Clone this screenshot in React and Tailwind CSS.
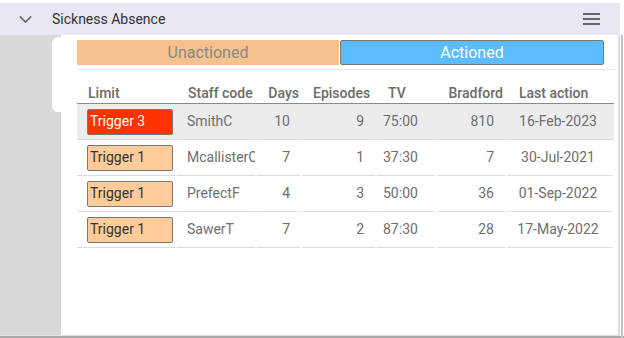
import React from 'react';
import { ChevronDown } from 'lucide-react';

const rows = [
  { limit: 'Trigger 3', level: 3, staff: 'SmithC', days: 10, episodes: 9, tv: '75:00', bradford: 810, last: '16-Feb-2023' },
  { limit: 'Trigger 1', level: 1, staff: 'McallisterC', days: 7, episodes: 1, tv: '37:30', bradford: 7, last: '30-Jul-2021' },
  { limit: 'Trigger 1', level: 1, staff: 'PrefectF', days: 4, episodes: 3, tv: '50:00', bradford: 36, last: '01-Sep-2022' },
  { limit: 'Trigger 1', level: 1, staff: 'SawerT', days: 7, episodes: 2, tv: '87:30', bradford: 28, last: '17-May-2022' },
];

// column widths taken from the cell separators
const cols = 'grid grid-cols-[98px_78px_43px_73px_58px_68px_106px] gap-x-[2px]';

export default function App() {
  return (
    <div className="w-[624px] h-[338px] bg-white overflow-hidden font-['Roboto',sans-serif] relative">
      <div className="pt-[3px] h-[336px] w-[620px] flex flex-col">
        {/* Widget header */}
        <div className="h-[32px] shrink-0 bg-[#e8e8f4] flex items-center">
          <ChevronDown size={21} strokeWidth={1.7} className="ml-[15px] text-[#666]" />
          <span className="ml-[16px] text-[14px] text-[#333]">Sickness Absence</span>
          <div className="ml-auto mr-[20px] flex flex-col gap-[3px]">
            <div className="w-[17px] h-[2px] bg-[#666]"></div>
            <div className="w-[17px] h-[2px] bg-[#666]"></div>
            <div className="w-[17px] h-[2px] bg-[#666]"></div>
          </div>
        </div>

        <div className="flex flex-1 min-h-0">
          <div className="w-[61px] shrink-0 bg-[#d8d8d8] border-b border-[#e6e6e6]"></div>
          <div className="flex-1 bg-white border-r-2 border-b border-[#e0e0e0] pl-[16px] pr-[4px] pt-[5px]">
            {/* Tabs */}
            <div className="flex h-[25px] mr-[10px]">
              <div className="w-[262px] bg-[#f5c28e] flex items-center justify-center text-[16px] text-[#888]">
                Unactioned
              </div>
              <div className="flex-1 ml-[1px] bg-[#5bbcff] border border-[#777] rounded-[2px] flex items-center justify-center text-[16px] text-white">
                Actioned
              </div>
            </div>
            <div className="mt-[4px] h-px bg-[#e2e2e2]"></div>

            {/* Table header */}
            <div className={`${cols} mt-[13px] h-[21px] border-b border-[#8a8a8a] text-[14px] font-medium text-[#6b6b6b] leading-[20px]`}>
              <div className="pl-[11px]">Limit</div>
              <div className="pl-[11px]">Staff code</div>
              <div className="text-right pr-[1px]">Days</div>
              <div className="pl-[11px]">Episodes</div>
              <div className="pl-[11px]">TV</div>
              <div className="text-right pr-[2px]">Bradford</div>
              <div className="pl-[12px]">Last action</div>
            </div>

            {/* Rows */}
            {rows.map((r, i) => (
              <div key={i} className={`${cols} h-[36px] text-[14px] text-[#6e6e6e] ${i === 0 ? 'bg-[#ececec]' : ''}`}>
                <div className="border-b border-[#dcdcdc] flex items-center pl-[10px]">
                  <div
                    className={`w-[86px] h-[26px] border border-[#777] rounded-[2px] flex items-center pl-[2px] text-[14px] ${
                      r.level === 3 ? 'bg-[#ff3300] text-white' : 'bg-[#ffcc99] text-[#333]'
                    }`}
                  >
                    {r.limit}
                  </div>
                </div>
                <div className="border-b border-[#dcdcdc] flex items-center pl-[10px] overflow-hidden whitespace-nowrap">{r.staff}</div>
                <div className="border-b border-[#dcdcdc] flex items-center justify-end pr-[10px]">{r.days}</div>
                <div className="border-b border-[#dcdcdc] flex items-center justify-end pr-[11px]">{r.episodes}</div>
                <div className="border-b border-[#dcdcdc] flex items-center pl-[6px]">{r.tv}</div>
                <div className="border-b border-[#dcdcdc] flex items-center justify-end pr-[11px]">{r.bradford}</div>
                <div className="border-b border-[#dcdcdc] flex items-center justify-center pr-[4px]">{r.last}</div>
              </div>
            ))}
          </div>
        </div>
      </div>

      {/* floating white tab over the side panel */}
      <div className="absolute left-[52px] top-[37px] w-[20px] h-[75px] bg-white rounded-l-[6px]"></div>
      <div className="absolute left-0 bottom-0 w-[624px] h-[2px] bg-[#a8a8a8]"></div>
      <div className="absolute right-[1px] top-[35px] bottom-0 w-[2px] bg-[#c4c4c4]"></div>
    </div>
  );
}
